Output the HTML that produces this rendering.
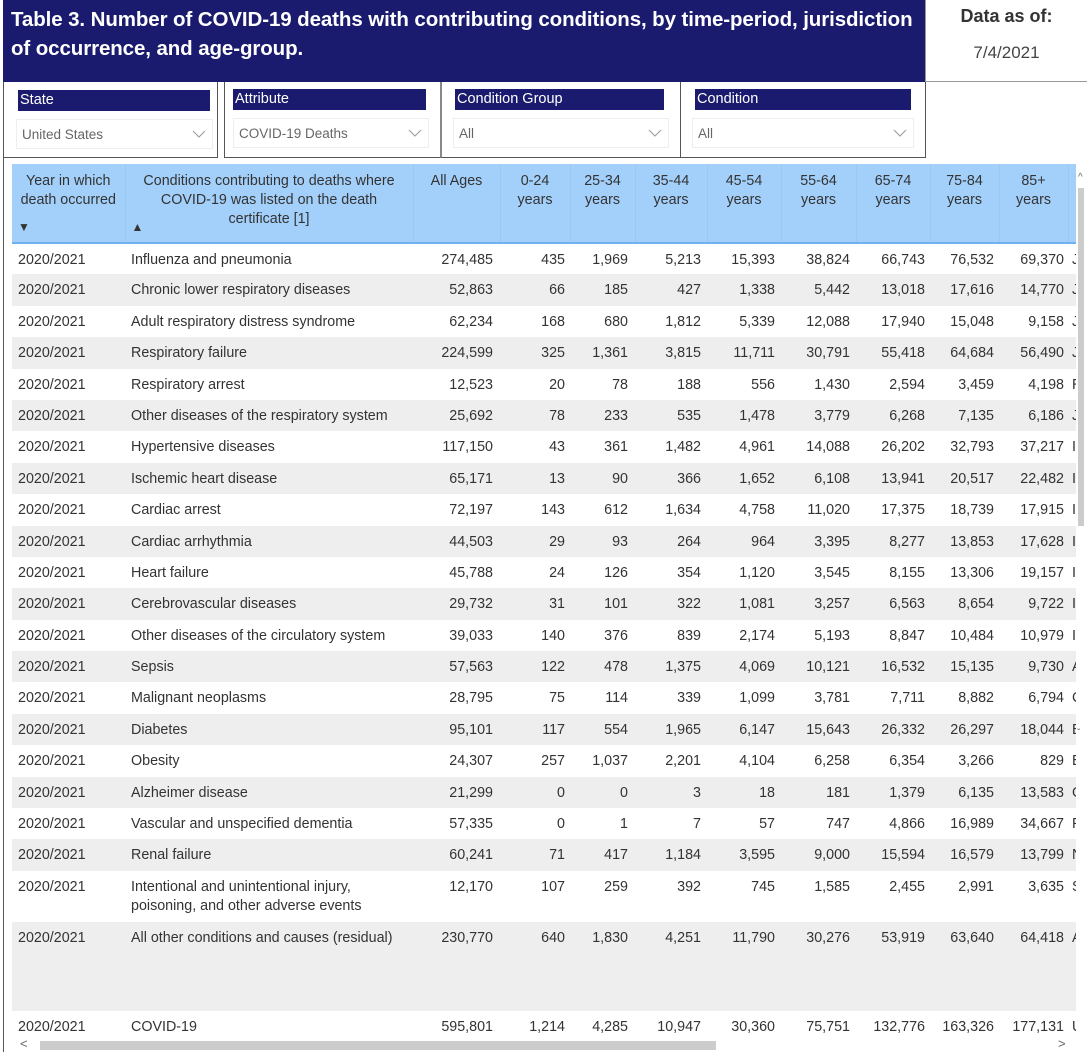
<!DOCTYPE html>
<html><head><meta charset="utf-8">
<style>
*{margin:0;padding:0;box-sizing:border-box}
body{width:1087px;height:1052px;overflow:hidden;background:#fff;font-family:"Liberation Sans",sans-serif;position:relative;color:#333}
.abs{position:absolute}
#title{left:3px;top:0;width:922px;height:82px;background:#1a1a6e;color:#fff;font-weight:bold;font-size:20.5px;line-height:29px;padding:5px 0 0 8px;letter-spacing:-0.1px;white-space:nowrap}
#asof{left:925px;top:0;width:162px;height:82px;border-left:1px solid #999;border-bottom:1px solid #999;text-align:center}
.slbox{top:82px;height:76px;border:1px solid #555}
.slh{position:absolute;height:21px;background:#1a1a6e;color:#fff;font-size:14.5px;line-height:21px;padding-left:2px}
.dd{position:absolute;height:30px;border:1px solid #eee;font-size:13.5px;color:#666;line-height:30px;padding-left:5px}
.dd svg{position:absolute;right:6px;top:10px}
#tbl{left:12px;top:164px;width:1064px;height:876px;overflow:hidden}
table{border-collapse:collapse;table-layout:fixed;width:1064px;font-size:14.3px}
th{background:#a3d0fa;font-weight:normal;color:#333;vertical-align:top;line-height:19px;padding-top:8px;height:79px;border-right:1px solid #9cc8f0;border-bottom:2px solid #6fb0ef;position:relative;text-align:center;white-space:nowrap}
td{vertical-align:top;padding-top:7px;line-height:19px;white-space:nowrap;overflow:hidden}
td.n{text-align:right}
tr.g td{background:#eee}
td:first-child{padding-left:6px}
td:nth-child(2){padding-left:6px}
td:nth-child(3){padding-right:7px}
td:nth-child(4){padding-right:5px}
td:nth-child(5){padding-right:7px}
td:nth-child(6),td:nth-child(7),td:nth-child(8){padding-right:6px}
td:nth-child(9),td:nth-child(10){padding-right:5px}
td:nth-child(11){padding-right:4px}
td:nth-child(12){padding-left:4px}
.arr{position:absolute;bottom:5px;font-size:12px}
</style></head><body>
<div id="title" class="abs">Table 3. Number of COVID-19 deaths with contributing conditions, by time-period, jurisdiction<br>of occurrence, and age-group.</div>
<div id="asof" class="abs"><div style="font-weight:bold;font-size:18px;margin-top:6px">Data as of:</div><div style="font-size:17px;margin-top:16px;color:#444">7/4/2021</div></div>
<div class="abs" style="left:925px;top:82px;width:162px;height:76px;border-left:1px solid #555"></div>

<div class="abs slbox" style="left:3px;width:215px;border-top:none">
 <div class="slh" style="left:14px;top:8px;width:192px">State</div>
 <div class="dd" style="left:12px;top:37px;width:197px">United States<svg width="14" height="8"><path d="M1 1L7 7L13 1" stroke="#999" fill="none"/></svg></div>
</div>
<div class="abs slbox" style="left:224px;width:217px;border-top:none">
 <div class="slh" style="left:8px;top:7px;width:193px">Attribute</div>
 <div class="dd" style="left:8px;top:36px;width:196px">COVID-19 Deaths<svg width="14" height="8"><path d="M1 1L7 7L13 1" stroke="#999" fill="none"/></svg></div>
</div>
<div class="abs slbox" style="left:440px;width:241px;border-top:none;border-left:2px solid #888">
 <div class="slh" style="left:13px;top:7px;width:209px">Condition Group</div>
 <div class="dd" style="left:11px;top:36px;width:216px">All<svg width="14" height="8"><path d="M1 1L7 7L13 1" stroke="#999" fill="none"/></svg></div>
</div>
<div class="abs slbox" style="left:680px;width:246px;border-top:none">
 <div class="slh" style="left:14px;top:7px;width:216px">Condition</div>
 <div class="dd" style="left:11px;top:36px;width:222px">All<svg width="14" height="8"><path d="M1 1L7 7L13 1" stroke="#999" fill="none"/></svg></div>
</div>
<div class="abs" style="left:3px;top:158px;width:1px;height:894px;background:#555"></div>

<div id="tbl" class="abs">
<table>
<colgroup><col style="width:113px"><col style="width:288px"><col style="width:87px"><col style="width:70px"><col style="width:65px"><col style="width:72px"><col style="width:74px"><col style="width:75px"><col style="width:74px"><col style="width:69px"><col style="width:69px"><col style="width:8px"></colgroup>
<tr><th>Year in which<br>death occurred<span class="arr" style="left:6px">&#9660;</span></th><th>Conditions contributing to deaths where<br>COVID-19 was listed on the death<br>certificate [1]<span class="arr" style="left:6px">&#9650;</span></th><th>All Ages</th><th>0-24<br>years</th><th>25-34<br>years</th><th>35-44<br>years</th><th>45-54<br>years</th><th>55-64<br>years</th><th>65-74<br>years</th><th>75-84<br>years</th><th>85+<br>years</th><th style="border-right:none"></th></tr>
<tr style="height:31.4px"><td>2020/2021</td><td>Influenza and pneumonia</td><td class="n">274,485</td><td class="n">435</td><td class="n">1,969</td><td class="n">5,213</td><td class="n">15,393</td><td class="n">38,824</td><td class="n">66,743</td><td class="n">76,532</td><td class="n">69,370</td><td>J</td></tr>
<tr class="g" style="height:31.4px"><td>2020/2021</td><td>Chronic lower respiratory diseases</td><td class="n">52,863</td><td class="n">66</td><td class="n">185</td><td class="n">427</td><td class="n">1,338</td><td class="n">5,442</td><td class="n">13,018</td><td class="n">17,616</td><td class="n">14,770</td><td>J</td></tr>
<tr style="height:31.4px"><td>2020/2021</td><td>Adult respiratory distress syndrome</td><td class="n">62,234</td><td class="n">168</td><td class="n">680</td><td class="n">1,812</td><td class="n">5,339</td><td class="n">12,088</td><td class="n">17,940</td><td class="n">15,048</td><td class="n">9,158</td><td>J</td></tr>
<tr class="g" style="height:31.4px"><td>2020/2021</td><td>Respiratory failure</td><td class="n">224,599</td><td class="n">325</td><td class="n">1,361</td><td class="n">3,815</td><td class="n">11,711</td><td class="n">30,791</td><td class="n">55,418</td><td class="n">64,684</td><td class="n">56,490</td><td>J</td></tr>
<tr style="height:31.4px"><td>2020/2021</td><td>Respiratory arrest</td><td class="n">12,523</td><td class="n">20</td><td class="n">78</td><td class="n">188</td><td class="n">556</td><td class="n">1,430</td><td class="n">2,594</td><td class="n">3,459</td><td class="n">4,198</td><td>R</td></tr>
<tr class="g" style="height:31.4px"><td>2020/2021</td><td>Other diseases of the respiratory system</td><td class="n">25,692</td><td class="n">78</td><td class="n">233</td><td class="n">535</td><td class="n">1,478</td><td class="n">3,779</td><td class="n">6,268</td><td class="n">7,135</td><td class="n">6,186</td><td>J</td></tr>
<tr style="height:31.4px"><td>2020/2021</td><td>Hypertensive diseases</td><td class="n">117,150</td><td class="n">43</td><td class="n">361</td><td class="n">1,482</td><td class="n">4,961</td><td class="n">14,088</td><td class="n">26,202</td><td class="n">32,793</td><td class="n">37,217</td><td>I</td></tr>
<tr class="g" style="height:31.4px"><td>2020/2021</td><td>Ischemic heart disease</td><td class="n">65,171</td><td class="n">13</td><td class="n">90</td><td class="n">366</td><td class="n">1,652</td><td class="n">6,108</td><td class="n">13,941</td><td class="n">20,517</td><td class="n">22,482</td><td>I</td></tr>
<tr style="height:31.4px"><td>2020/2021</td><td>Cardiac arrest</td><td class="n">72,197</td><td class="n">143</td><td class="n">612</td><td class="n">1,634</td><td class="n">4,758</td><td class="n">11,020</td><td class="n">17,375</td><td class="n">18,739</td><td class="n">17,915</td><td>I</td></tr>
<tr class="g" style="height:31.4px"><td>2020/2021</td><td>Cardiac arrhythmia</td><td class="n">44,503</td><td class="n">29</td><td class="n">93</td><td class="n">264</td><td class="n">964</td><td class="n">3,395</td><td class="n">8,277</td><td class="n">13,853</td><td class="n">17,628</td><td>I</td></tr>
<tr style="height:31.4px"><td>2020/2021</td><td>Heart failure</td><td class="n">45,788</td><td class="n">24</td><td class="n">126</td><td class="n">354</td><td class="n">1,120</td><td class="n">3,545</td><td class="n">8,155</td><td class="n">13,306</td><td class="n">19,157</td><td>I</td></tr>
<tr class="g" style="height:31.4px"><td>2020/2021</td><td>Cerebrovascular diseases</td><td class="n">29,732</td><td class="n">31</td><td class="n">101</td><td class="n">322</td><td class="n">1,081</td><td class="n">3,257</td><td class="n">6,563</td><td class="n">8,654</td><td class="n">9,722</td><td>I</td></tr>
<tr style="height:31.4px"><td>2020/2021</td><td>Other diseases of the circulatory system</td><td class="n">39,033</td><td class="n">140</td><td class="n">376</td><td class="n">839</td><td class="n">2,174</td><td class="n">5,193</td><td class="n">8,847</td><td class="n">10,484</td><td class="n">10,979</td><td>I</td></tr>
<tr class="g" style="height:31.4px"><td>2020/2021</td><td>Sepsis</td><td class="n">57,563</td><td class="n">122</td><td class="n">478</td><td class="n">1,375</td><td class="n">4,069</td><td class="n">10,121</td><td class="n">16,532</td><td class="n">15,135</td><td class="n">9,730</td><td>A</td></tr>
<tr style="height:31.4px"><td>2020/2021</td><td>Malignant neoplasms</td><td class="n">28,795</td><td class="n">75</td><td class="n">114</td><td class="n">339</td><td class="n">1,099</td><td class="n">3,781</td><td class="n">7,711</td><td class="n">8,882</td><td class="n">6,794</td><td>C</td></tr>
<tr class="g" style="height:31.4px"><td>2020/2021</td><td>Diabetes</td><td class="n">95,101</td><td class="n">117</td><td class="n">554</td><td class="n">1,965</td><td class="n">6,147</td><td class="n">15,643</td><td class="n">26,332</td><td class="n">26,297</td><td class="n">18,044</td><td>E</td></tr>
<tr style="height:31.4px"><td>2020/2021</td><td>Obesity</td><td class="n">24,307</td><td class="n">257</td><td class="n">1,037</td><td class="n">2,201</td><td class="n">4,104</td><td class="n">6,258</td><td class="n">6,354</td><td class="n">3,266</td><td class="n">829</td><td>E</td></tr>
<tr class="g" style="height:31.4px"><td>2020/2021</td><td>Alzheimer disease</td><td class="n">21,299</td><td class="n">0</td><td class="n">0</td><td class="n">3</td><td class="n">18</td><td class="n">181</td><td class="n">1,379</td><td class="n">6,135</td><td class="n">13,583</td><td>G</td></tr>
<tr style="height:31.4px"><td>2020/2021</td><td>Vascular and unspecified dementia</td><td class="n">57,335</td><td class="n">0</td><td class="n">1</td><td class="n">7</td><td class="n">57</td><td class="n">747</td><td class="n">4,866</td><td class="n">16,989</td><td class="n">34,667</td><td>F</td></tr>
<tr class="g" style="height:31.4px"><td>2020/2021</td><td>Renal failure</td><td class="n">60,241</td><td class="n">71</td><td class="n">417</td><td class="n">1,184</td><td class="n">3,595</td><td class="n">9,000</td><td class="n">15,594</td><td class="n">16,579</td><td class="n">13,799</td><td>N</td></tr>
<tr style="height:51px"><td>2020/2021</td><td>Intentional and unintentional injury,<br>poisoning, and other adverse events</td><td class="n">12,170</td><td class="n">107</td><td class="n">259</td><td class="n">392</td><td class="n">745</td><td class="n">1,585</td><td class="n">2,455</td><td class="n">2,991</td><td class="n">3,635</td><td>S</td></tr>
<tr class="g" style="height:89px"><td>2020/2021</td><td>All other conditions and causes (residual)</td><td class="n">230,770</td><td class="n">640</td><td class="n">1,830</td><td class="n">4,251</td><td class="n">11,790</td><td class="n">30,276</td><td class="n">53,919</td><td class="n">63,640</td><td class="n">64,418</td><td>A</td></tr>
<tr style="height:31px"><td>2020/2021</td><td>COVID-19</td><td class="n">595,801</td><td class="n">1,214</td><td class="n">4,285</td><td class="n">10,947</td><td class="n">30,360</td><td class="n">75,751</td><td class="n">132,776</td><td class="n">163,326</td><td class="n">177,131</td><td>U</td></tr>
</table>
</div>
<div class="abs" style="left:1076px;top:164px;width:11px;height:876px;background:#fff"></div>
<div class="abs" style="left:1078px;top:172px;font-size:10px;color:#666">^</div>
<div class="abs" style="left:1078px;top:188px;width:6px;height:338px;background:#ccc"></div>
<div class="abs" style="left:1077px;top:728px;font-size:10px;color:#666">&#711;</div>
<div class="abs" style="left:12px;top:1040px;width:1064px;height:12px;background:#fff"></div>
<div class="abs" style="left:40px;top:1041px;width:676px;height:9px;background:#ccc"></div>
<div class="abs" style="left:20px;top:1036px;font-size:13px;color:#666">&lt;</div>
<div class="abs" style="left:1058px;top:1036px;font-size:13px;color:#666">&gt;</div>
</body></html>
